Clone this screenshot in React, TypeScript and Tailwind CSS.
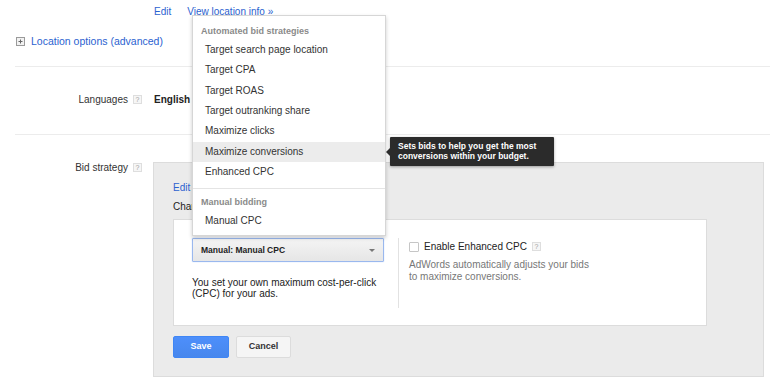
import React from 'react';

const LINK = 'text-[#2b62d0]';

const AUTOMATED = [
  'Target search page location',
  'Target CPA',
  'Target ROAS',
  'Target outranking share',
  'Maximize clicks',
  'Maximize conversions',
  'Enhanced CPC',
];

function HelpIcon() {
  return (
    <span className="inline-flex h-[9px] w-[9px] items-center justify-center border border-[#dedede] bg-[#f6f6f6] text-[7px] leading-none text-[#a0a0a0]">
      ?
    </span>
  );
}

function PlusBox() {
  return (
    <svg width="9" height="9" viewBox="0 0 9 9" className="shrink-0">
      <rect x="0.5" y="0.5" width="8" height="8" fill="#f2f2f2" stroke="#9a9a9a" />
      <path d="M2.5 4.5h4M4.5 2.5v4" stroke="#666" strokeWidth="1" />
    </svg>
  );
}

function StrategyMenu() {
  return (
    <div className="absolute left-[192px] top-[15px] z-10 w-[194px] border border-[#d6d6d6] bg-white shadow-[0_2px_4px_rgba(0,0,0,0.2)]">
      <div className="pt-[7px]">
        <div className="h-[17px] pl-[8px] text-[9px] font-bold leading-[16px] text-[#8a8a8a]">
          Automated bid strategies
        </div>
        {AUTOMATED.map((label) => (
          <div
            key={label}
            className={`h-[20.33px] pl-[12px] text-[10px] leading-[20.33px] text-[#333] ${
              label === 'Maximize conversions' ? 'bg-[#ececec]' : ''
            }`}
          >
            {label}
          </div>
        ))}
      </div>
      <div className="mt-[6px] border-t border-[#e4e4e4] pb-[4px] pt-[5px]">
        <div className="h-[16px] pl-[8px] text-[9px] font-bold leading-[16px] text-[#8a8a8a]">
          Manual bidding
        </div>
        <div className="mt-[1px] h-[20px] pl-[12px] text-[10px] leading-[20px] text-[#333]">Manual CPC</div>
      </div>
    </div>
  );
}

function Tooltip() {
  return (
    <div className="absolute left-[390px] top-[137px] z-20 h-[29px] w-[164px] rounded-[1px] bg-[#2b2b2b] pl-[8px] pt-[4px] text-[8.5px] font-bold leading-[10px] text-white shadow-[0_1px_3px_rgba(0,0,0,0.35)]">
      <span className="absolute left-[-4px] top-[11px] h-0 w-0 border-y-[4px] border-r-[4px] border-y-transparent border-r-[#2b2b2b]" />
      <div>Sets bids to help you get the most</div>
      <div>conversions within your budget.</div>
    </div>
  );
}

export default function App() {
  return (
    <div className="relative h-[383px] w-[770px] overflow-hidden bg-white font-['Liberation_Sans',Arial,sans-serif] text-[10px] text-[#333]">
      {/* location links */}
      <div className="flex h-[22px] items-center gap-[16px] pl-[154px]">
        <span className={LINK}>Edit</span>
        <span className={LINK}>View location info »</span>
      </div>
      <div className="flex h-[44px] items-center gap-[6px] pb-[5px] pl-[16px]">
        <PlusBox />
        <span className={`${LINK} text-[10.5px]`}>Location options (advanced)</span>
      </div>
      <div className="ml-[15px] h-px bg-[#ececec]" />

      {/* languages */}
      <div className="flex h-[67px] items-center pb-[2px]">
        <div className="w-[128px] text-right">Languages</div>
        <div className="ml-[5px] flex">
          <HelpIcon />
        </div>
        <div className="ml-[12px] font-bold text-[#222]">English</div>
      </div>
      <div className="ml-[15px] h-px bg-[#ececec]" />

      {/* bid strategy */}
      <div className="flex items-start pt-[27px]">
        <div className="mt-[1px] flex w-[128px] justify-end leading-[10px]">Bid strategy</div>
        <div className="ml-[5px] mt-[1px] flex">
          <HelpIcon />
        </div>
        <div className="ml-[11px] h-[215px] w-[611px] border border-[#dcdcdc] bg-[#ebebeb] pl-[19px] pt-[19px]">
          <div className={`${LINK} leading-[12px]`}>Edit</div>
          {/* the open menu covers most of this line */}
          <div className="mt-[7px] whitespace-nowrap leading-[12px] text-[#222]">Change bid strategy type</div>
          <div className="mt-[6px] flex h-[107px] w-[534px] border border-[#dcdcdc] bg-white pl-[18px] pt-[18px]">
            <div className="w-[192px]">
              <div className="flex h-[24px] items-center justify-between rounded-[1px] border border-[#9ab8ee] bg-gradient-to-b from-[#f4f4f4] to-[#e6e6e6] pl-[8px] pr-[8px] shadow-[0_0_1px_rgba(77,144,254,0.6)]">
                <span className="text-[8.5px] font-bold text-[#222]">Manual: Manual CPC</span>
                <span className="h-0 w-0 border-x-[3px] border-t-[3px] border-x-transparent border-t-[#777]" />
              </div>
              <div className="mt-[15px] leading-[11px] text-[#222]">
                You set your own maximum cost-per-click
                <br />
                (CPC) for your ads.
              </div>
            </div>
            <div className="ml-[14px] h-[70px] border-l border-[#e2e2e2] pl-[10px] pt-[1px]">
              <div className="flex items-center">
                <span className="h-[10px] w-[10px] rounded-[1px] border border-[#c6c6c6] bg-white" />
                <span className="ml-[5px] text-[#222]">Enable Enhanced CPC</span>
                <span className="ml-[5px] flex">
                  <HelpIcon />
                </span>
              </div>
              <div className="mt-[5px] leading-[12px] text-[#777]">
                AdWords automatically adjusts your bids
                <br />
                to maximize conversions.
              </div>
            </div>
          </div>
          <div className="mt-[10px] flex gap-[7px]">
            <div className="flex h-[22px] w-[56px] items-center justify-center rounded-[2px] border border-[#3f86f5] bg-gradient-to-b from-[#4d8ffb] to-[#4787ed] text-[9px] font-bold text-white">
              Save
            </div>
            <div className="flex h-[22px] w-[55px] items-center justify-center rounded-[2px] border border-[#dcdcdc] bg-[#f5f5f5] text-[9px] font-bold text-[#333]">
              Cancel
            </div>
          </div>
        </div>
      </div>

      <StrategyMenu />
      <Tooltip />
    </div>
  );
}
